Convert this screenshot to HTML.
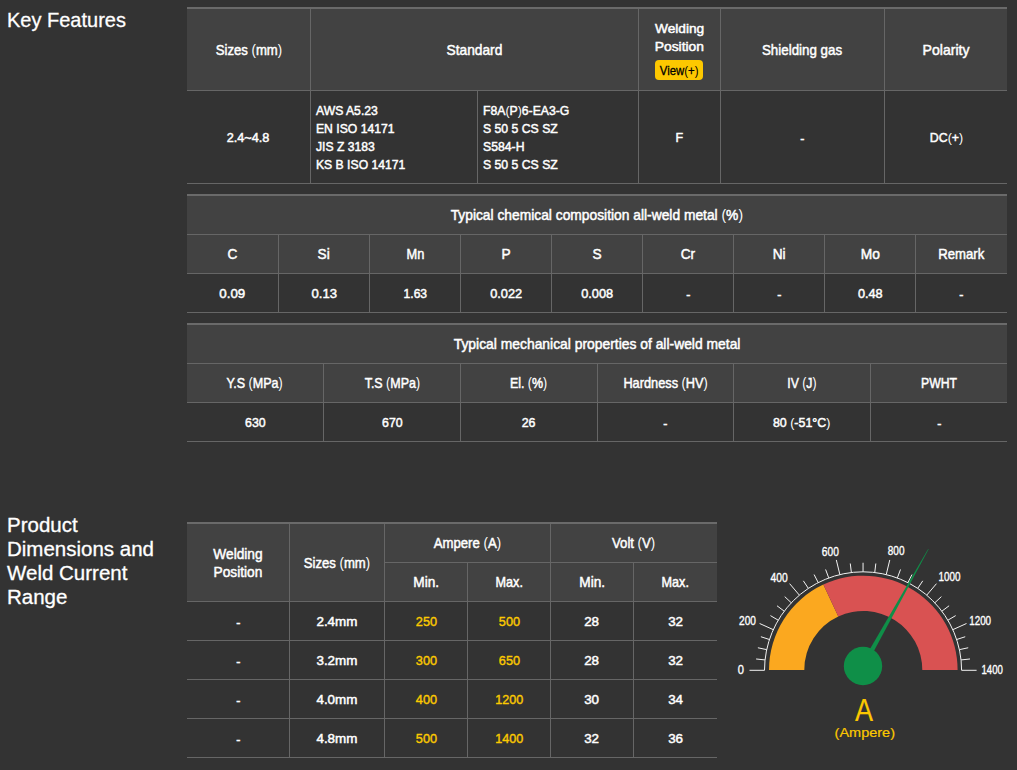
<!DOCTYPE html>
<html><head><meta charset="utf-8"><style>
html,body{margin:0;padding:0;background:#333333;}
body{width:1017px;height:770px;position:relative;overflow:hidden;font-family:"Liberation Sans",sans-serif;color:#ffffff;}
.h{position:absolute;font-size:20px;line-height:24px;white-space:nowrap;-webkit-text-stroke:0.3px #fff;}
.t{position:absolute;display:flex;align-items:center;justify-content:center;text-align:center;white-space:nowrap;}
.t>div{-webkit-text-stroke:0.5px #fff;}
.t.hd>div{-webkit-text-stroke:0.5px #fff;}
.pr{-webkit-text-stroke:0 !important;}
.t.left{justify-content:flex-start;text-align:left;}
.t.left>div{transform-origin:left center;}
.t.gold{color:#fcca00;}
.t.gold>div{-webkit-text-stroke:0.4px #fcca00;}
.t.badge2{color:#000;font-size:13px !important}
.t.badge2>div{-webkit-text-stroke:0.3px #000;}
.badge{display:inline-block;background:#fcc800;color:#000;-webkit-text-stroke:0.3px #000;border-radius:5px;height:20px;line-height:20px;padding:0 3px;font-size:12.5px;margin-top:2px;}
</style></head>
<body>
<div class="h" style="left:7px;top:7.5px;font-size:21px;transform:scaleX(0.952);transform-origin:left">Key Features</div>
<div class="h" style="left:7px;top:512.5px;font-size:20.5px">Product<br>Dimensions and<br>Weld Current<br>Range</div>
<div style="position:absolute;left:187px;top:7px;width:820px;height:2px;background:#6a6a6a"></div>
<div style="position:absolute;left:187px;top:9px;width:820px;height:81px;background:#424242"></div>
<div style="position:absolute;left:187px;top:90px;width:820px;height:1px;background:#666666"></div>
<div style="position:absolute;left:187px;top:183px;width:820px;height:1px;background:#666666"></div>
<div style="position:absolute;left:310px;top:9px;width:1px;height:174px;background:#666666"></div>
<div style="position:absolute;left:638px;top:9px;width:1px;height:174px;background:#666666"></div>
<div style="position:absolute;left:720px;top:9px;width:1px;height:174px;background:#666666"></div>
<div style="position:absolute;left:884px;top:9px;width:1px;height:174px;background:#666666"></div>
<div style="position:absolute;left:477px;top:91px;width:1px;height:92px;background:#666666"></div>
<div class="t hd " style="left:187px;top:8.5px;width:123px;height:81px;font-size:15.0px;"><div style="transform:scaleX(0.8759)">Sizes <span class="pr">(</span>mm<span class="pr">)</span></div></div>
<div class="t hd " style="left:311px;top:8.5px;width:327px;height:81px;font-size:15.0px;"><div style="transform:scaleX(0.9167)">Standard</div></div>
<div class="t bd " style="left:639px;top:20.0px;width:81px;height:16px;font-size:13.7px;"><div style="transform:scaleX(1.0010)">Welding</div></div>
<div class="t bd " style="left:639px;top:38.1px;width:81px;height:16px;font-size:13.7px;"><div style="transform:scaleX(1.0112)">Position</div></div>
<div style="position:absolute;left:655px;top:60px;width:48px;height:20px;border-radius:4px;background:#fdc800"></div>
<div class="t bd badge2" style="left:655px;top:60.5px;width:48px;height:20px;font-size:13.7px;"><div style="transform:scaleX(0.8730)">View<span class="pr">(</span>+<span class="pr">)</span></div></div>
<div class="t hd " style="left:721px;top:8.5px;width:163px;height:81px;font-size:15.0px;"><div style="transform:scaleX(0.8899)">Shielding gas</div></div>
<div class="t hd " style="left:885px;top:8.5px;width:122px;height:81px;font-size:15.0px;"><div style="transform:scaleX(0.9364)">Polarity</div></div>
<div class="t bd " style="left:187px;top:91.8px;width:123px;height:92px;font-size:13.7px;"><div style="transform:scaleX(0.9267)">2.4~4.8</div></div>
<div class="t bd left" style="left:316px;top:91.8px;width:161px;height:92px;font-size:13.7px;line-height:18px;"><div style="transform:scaleX(0.8894)">AWS A5.23<br>EN ISO 14171<br>JIS Z 3183<br>KS B ISO 14171</div></div>
<div class="t bd left" style="left:483px;top:91.8px;width:155px;height:92px;font-size:13.7px;line-height:18px;"><div style="transform:scaleX(0.8938)">F8A<span class="pr">(</span>P<span class="pr">)</span>6-EA3-G<br>S 50 5 CS SZ<br>S584-H<br>S 50 5 CS SZ</div></div>
<div class="t bd " style="left:639px;top:91.8px;width:81px;height:92px;font-size:13.7px;"><div style="transform:scaleX(0.9100)">F</div></div>
<div class="t bd " style="left:721px;top:92.8px;width:163px;height:92px;font-size:13.7px;"><div style="transform:scaleX(0.9100)">-</div></div>
<div class="t bd " style="left:885px;top:91.8px;width:122px;height:92px;font-size:13.7px;"><div style="transform:scaleX(0.9032)">DC<span class="pr">(</span>+<span class="pr">)</span></div></div>
<div style="position:absolute;left:187px;top:194px;width:820px;height:2px;background:#6a6a6a"></div>
<div style="position:absolute;left:187px;top:196px;width:820px;height:77px;background:#424242"></div>
<div style="position:absolute;left:187px;top:234px;width:820px;height:1px;background:#666666"></div>
<div style="position:absolute;left:187px;top:273px;width:820px;height:1px;background:#666666"></div>
<div style="position:absolute;left:187px;top:312px;width:820px;height:1px;background:#666666"></div>
<div style="position:absolute;left:278px;top:235px;width:1px;height:77px;background:#666666"></div>
<div style="position:absolute;left:369px;top:235px;width:1px;height:77px;background:#666666"></div>
<div style="position:absolute;left:460px;top:235px;width:1px;height:77px;background:#666666"></div>
<div style="position:absolute;left:551px;top:235px;width:1px;height:77px;background:#666666"></div>
<div style="position:absolute;left:642px;top:235px;width:1px;height:77px;background:#666666"></div>
<div style="position:absolute;left:733px;top:235px;width:1px;height:77px;background:#666666"></div>
<div style="position:absolute;left:824px;top:235px;width:1px;height:77px;background:#666666"></div>
<div style="position:absolute;left:915px;top:235px;width:1px;height:77px;background:#666666"></div>
<div class="t hd " style="left:187px;top:195.5px;width:820px;height:38px;font-size:15.0px;"><div style="transform:scaleX(0.9204)">Typical chemical composition all-weld metal <span class="pr">(</span>%<span class="pr">)</span></div></div>
<div class="t hd " style="left:187px;top:234.5px;width:91px;height:38px;font-size:15.0px;"><div style="transform:scaleX(0.9100)">C</div></div>
<div class="t bd " style="left:187px;top:274.8px;width:91px;height:38px;font-size:13.7px;"><div style="transform:scaleX(0.9722)">0.09</div></div>
<div class="t hd " style="left:279px;top:234.5px;width:90px;height:38px;font-size:15.0px;"><div style="transform:scaleX(0.9100)">Si</div></div>
<div class="t bd " style="left:279px;top:274.8px;width:90px;height:38px;font-size:13.7px;"><div style="transform:scaleX(0.9573)">0.13</div></div>
<div class="t hd " style="left:370px;top:234.5px;width:90px;height:38px;font-size:15.0px;"><div style="transform:scaleX(0.8558)">Mn</div></div>
<div class="t bd " style="left:370px;top:274.8px;width:90px;height:38px;font-size:13.7px;"><div style="transform:scaleX(0.8831)">1.63</div></div>
<div class="t hd " style="left:461px;top:234.5px;width:90px;height:38px;font-size:15.0px;"><div style="transform:scaleX(0.9100)">P</div></div>
<div class="t bd " style="left:461px;top:274.8px;width:90px;height:38px;font-size:13.7px;"><div style="transform:scaleX(0.9335)">0.022</div></div>
<div class="t hd " style="left:552px;top:234.5px;width:90px;height:38px;font-size:15.0px;"><div style="transform:scaleX(0.9100)">S</div></div>
<div class="t bd " style="left:552px;top:274.8px;width:90px;height:38px;font-size:13.7px;"><div style="transform:scaleX(0.9335)">0.008</div></div>
<div class="t hd " style="left:643px;top:234.5px;width:90px;height:38px;font-size:15.0px;"><div style="transform:scaleX(0.9100)">Cr</div></div>
<div class="t bd " style="left:643px;top:275.8px;width:90px;height:38px;font-size:13.7px;"><div style="transform:scaleX(0.9100)">-</div></div>
<div class="t hd " style="left:734px;top:234.5px;width:90px;height:38px;font-size:15.0px;"><div style="transform:scaleX(0.9100)">Ni</div></div>
<div class="t bd " style="left:734px;top:275.8px;width:90px;height:38px;font-size:13.7px;"><div style="transform:scaleX(0.9100)">-</div></div>
<div class="t hd " style="left:825px;top:234.5px;width:90px;height:38px;font-size:15.0px;"><div style="transform:scaleX(0.9173)">Mo</div></div>
<div class="t bd " style="left:825px;top:274.8px;width:90px;height:38px;font-size:13.7px;"><div style="transform:scaleX(0.9276)">0.48</div></div>
<div class="t hd " style="left:916px;top:234.5px;width:91px;height:38px;font-size:15.0px;"><div style="transform:scaleX(0.8761)">Remark</div></div>
<div class="t bd " style="left:916px;top:275.8px;width:91px;height:38px;font-size:13.7px;"><div style="transform:scaleX(0.9100)">-</div></div>
<div style="position:absolute;left:187px;top:323px;width:820px;height:2px;background:#6a6a6a"></div>
<div style="position:absolute;left:187px;top:325px;width:820px;height:77px;background:#424242"></div>
<div style="position:absolute;left:187px;top:363px;width:820px;height:1px;background:#666666"></div>
<div style="position:absolute;left:187px;top:402px;width:820px;height:1px;background:#666666"></div>
<div style="position:absolute;left:187px;top:441px;width:820px;height:1px;background:#666666"></div>
<div style="position:absolute;left:323px;top:364px;width:1px;height:77px;background:#666666"></div>
<div style="position:absolute;left:460px;top:364px;width:1px;height:77px;background:#666666"></div>
<div style="position:absolute;left:597px;top:364px;width:1px;height:77px;background:#666666"></div>
<div style="position:absolute;left:733px;top:364px;width:1px;height:77px;background:#666666"></div>
<div style="position:absolute;left:870px;top:364px;width:1px;height:77px;background:#666666"></div>
<div class="t hd " style="left:187px;top:324.5px;width:820px;height:38px;font-size:15.0px;"><div style="transform:scaleX(0.9245)">Typical mechanical properties of all-weld metal</div></div>
<div class="t hd " style="left:187px;top:363.5px;width:136px;height:38px;font-size:15.0px;"><div style="transform:scaleX(0.8364)">Y.S <span class="pr">(</span>MPa<span class="pr">)</span></div></div>
<div class="t bd " style="left:187px;top:403.8px;width:136px;height:38px;font-size:13.7px;"><div style="transform:scaleX(0.9028)">630</div></div>
<div class="t hd " style="left:324px;top:363.5px;width:136px;height:38px;font-size:15.0px;"><div style="transform:scaleX(0.8305)">T.S <span class="pr">(</span>MPa<span class="pr">)</span></div></div>
<div class="t bd " style="left:324px;top:403.8px;width:136px;height:38px;font-size:13.7px;"><div style="transform:scaleX(0.9028)">670</div></div>
<div class="t hd " style="left:461px;top:363.5px;width:136px;height:38px;font-size:15.0px;"><div style="transform:scaleX(0.8278)">El. <span class="pr">(</span>%<span class="pr">)</span></div></div>
<div class="t bd " style="left:461px;top:403.8px;width:136px;height:38px;font-size:13.7px;"><div style="transform:scaleX(0.9068)">26</div></div>
<div class="t hd " style="left:598px;top:363.5px;width:135px;height:38px;font-size:15.0px;"><div style="transform:scaleX(0.8513)">Hardness <span class="pr">(</span>HV<span class="pr">)</span></div></div>
<div class="t bd " style="left:598px;top:404.8px;width:135px;height:38px;font-size:13.7px;"><div style="transform:scaleX(0.9100)">-</div></div>
<div class="t hd " style="left:734px;top:363.5px;width:136px;height:38px;font-size:15.0px;"><div style="transform:scaleX(0.8160)">IV <span class="pr">(</span>J<span class="pr">)</span></div></div>
<div class="t bd " style="left:734px;top:403.8px;width:136px;height:38px;font-size:13.7px;"><div style="transform:scaleX(0.9065)">80 <span class="pr">(</span>-51°C<span class="pr">)</span></div></div>
<div class="t hd " style="left:871px;top:363.5px;width:136px;height:38px;font-size:15.0px;"><div style="transform:scaleX(0.8144)">PWHT</div></div>
<div class="t bd " style="left:871px;top:404.8px;width:136px;height:38px;font-size:13.7px;"><div style="transform:scaleX(0.9100)">-</div></div>
<div style="position:absolute;left:187px;top:522px;width:530px;height:2px;background:#6a6a6a"></div>
<div style="position:absolute;left:187px;top:524px;width:530px;height:77px;background:#424242"></div>
<div style="position:absolute;left:384px;top:562px;width:333px;height:1px;background:#666666"></div>
<div style="position:absolute;left:187px;top:601px;width:530px;height:1px;background:#666666"></div>
<div style="position:absolute;left:289px;top:524px;width:1px;height:233px;background:#666666"></div>
<div style="position:absolute;left:384px;top:524px;width:1px;height:233px;background:#666666"></div>
<div style="position:absolute;left:550px;top:524px;width:1px;height:233px;background:#666666"></div>
<div style="position:absolute;left:467px;top:563px;width:1px;height:194px;background:#666666"></div>
<div style="position:absolute;left:633px;top:563px;width:1px;height:194px;background:#666666"></div>
<div style="position:absolute;left:187px;top:640px;width:530px;height:1px;background:#666666"></div>
<div style="position:absolute;left:187px;top:679px;width:530px;height:1px;background:#666666"></div>
<div style="position:absolute;left:187px;top:718px;width:530px;height:1px;background:#666666"></div>
<div style="position:absolute;left:187px;top:757px;width:530px;height:1px;background:#666666"></div>
<div class="t hd " style="left:187px;top:524.5px;width:102px;height:77px;font-size:15.0px;line-height:18px;"><div style="transform:scaleX(0.9133)">Welding<br>Position</div></div>
<div class="t hd " style="left:290px;top:524.2px;width:94px;height:77px;font-size:15.0px;"><div style="transform:scaleX(0.8759)">Sizes <span class="pr">(</span>mm<span class="pr">)</span></div></div>
<div class="t hd " style="left:385px;top:523.5px;width:165px;height:38px;font-size:15.0px;"><div style="transform:scaleX(0.8792)">Ampere <span class="pr">(</span>A<span class="pr">)</span></div></div>
<div class="t hd " style="left:551px;top:523.5px;width:166px;height:38px;font-size:15.0px;"><div style="transform:scaleX(0.8747)">Volt <span class="pr">(</span>V<span class="pr">)</span></div></div>
<div class="t hd " style="left:385px;top:562.5px;width:82px;height:38px;font-size:15.0px;"><div style="transform:scaleX(0.9110)">Min.</div></div>
<div class="t hd " style="left:468px;top:562.5px;width:82px;height:38px;font-size:15.0px;"><div style="transform:scaleX(0.8415)">Max.</div></div>
<div class="t hd " style="left:551px;top:562.5px;width:82px;height:38px;font-size:15.0px;"><div style="transform:scaleX(0.9110)">Min.</div></div>
<div class="t hd " style="left:634px;top:562.5px;width:83px;height:38px;font-size:15.0px;"><div style="transform:scaleX(0.8415)">Max.</div></div>
<div class="t bd " style="left:187px;top:603.8px;width:102px;height:38px;font-size:13.7px;"><div style="transform:scaleX(0.9100)">-</div></div>
<div class="t bd " style="left:290px;top:602.8px;width:94px;height:38px;font-size:13.7px;"><div style="transform:scaleX(0.9798)">2.4mm</div></div>
<div class="t bd gold" style="left:385px;top:602.8px;width:82px;height:38px;font-size:13.7px;"><div style="transform:scaleX(0.9287)">250</div></div>
<div class="t bd gold" style="left:468px;top:602.8px;width:82px;height:38px;font-size:13.7px;"><div style="transform:scaleX(0.9287)">500</div></div>
<div class="t bd " style="left:551px;top:602.8px;width:82px;height:38px;font-size:13.7px;"><div style="transform:scaleX(0.9775)">28</div></div>
<div class="t bd " style="left:634px;top:602.8px;width:83px;height:38px;font-size:13.7px;"><div style="transform:scaleX(0.9775)">32</div></div>
<div class="t bd " style="left:187px;top:642.8px;width:102px;height:38px;font-size:13.7px;"><div style="transform:scaleX(0.9100)">-</div></div>
<div class="t bd " style="left:290px;top:641.8px;width:94px;height:38px;font-size:13.7px;"><div style="transform:scaleX(0.9798)">3.2mm</div></div>
<div class="t bd gold" style="left:385px;top:641.8px;width:82px;height:38px;font-size:13.7px;"><div style="transform:scaleX(0.9287)">300</div></div>
<div class="t bd gold" style="left:468px;top:641.8px;width:82px;height:38px;font-size:13.7px;"><div style="transform:scaleX(0.9287)">650</div></div>
<div class="t bd " style="left:551px;top:641.8px;width:82px;height:38px;font-size:13.7px;"><div style="transform:scaleX(0.9775)">28</div></div>
<div class="t bd " style="left:634px;top:641.8px;width:83px;height:38px;font-size:13.7px;"><div style="transform:scaleX(0.9775)">32</div></div>
<div class="t bd " style="left:187px;top:681.8px;width:102px;height:38px;font-size:13.7px;"><div style="transform:scaleX(0.9100)">-</div></div>
<div class="t bd " style="left:290px;top:680.8px;width:94px;height:38px;font-size:13.7px;"><div style="transform:scaleX(0.9798)">4.0mm</div></div>
<div class="t bd gold" style="left:385px;top:680.8px;width:82px;height:38px;font-size:13.7px;"><div style="transform:scaleX(0.9287)">400</div></div>
<div class="t bd gold" style="left:468px;top:680.8px;width:82px;height:38px;font-size:13.7px;"><div style="transform:scaleX(0.9188)">1200</div></div>
<div class="t bd " style="left:551px;top:680.8px;width:82px;height:38px;font-size:13.7px;"><div style="transform:scaleX(0.9775)">30</div></div>
<div class="t bd " style="left:634px;top:680.8px;width:83px;height:38px;font-size:13.7px;"><div style="transform:scaleX(0.9775)">34</div></div>
<div class="t bd " style="left:187px;top:720.8px;width:102px;height:38px;font-size:13.7px;"><div style="transform:scaleX(0.9100)">-</div></div>
<div class="t bd " style="left:290px;top:719.8px;width:94px;height:38px;font-size:13.7px;"><div style="transform:scaleX(0.9798)">4.8mm</div></div>
<div class="t bd gold" style="left:385px;top:719.8px;width:82px;height:38px;font-size:13.7px;"><div style="transform:scaleX(0.9287)">500</div></div>
<div class="t bd gold" style="left:468px;top:719.8px;width:82px;height:38px;font-size:13.7px;"><div style="transform:scaleX(0.9188)">1400</div></div>
<div class="t bd " style="left:551px;top:719.8px;width:82px;height:38px;font-size:13.7px;"><div style="transform:scaleX(0.9775)">32</div></div>
<div class="t bd " style="left:634px;top:719.8px;width:83px;height:38px;font-size:13.7px;"><div style="transform:scaleX(0.9775)">36</div></div>
<svg style="position:absolute;left:0;top:0" width="1017" height="770" viewBox="0 0 1017 770">
<path d="M769.00,670.00 A94.3,94.3 0 0 1 823.34,584.58 L838.30,616.56 A59.0,59.0 0 0 0 804.30,670.00 Z" fill="#fba81f"/>
<path d="M823.34,584.58 A94.3,94.3 0 0 1 957.60,670.00 L922.30,670.00 A59.0,59.0 0 0 0 838.30,616.56 Z" fill="#d95252"/>
<path d="M764.50,670.30 A98.55,98.55 0 0 1 961.60,670.30" fill="none" stroke="#f2f2f2" stroke-width="1"/>
<line x1="764.50" y1="670.30" x2="749.50" y2="670.30" stroke="#f2f2f2" stroke-width="1"/>
<line x1="765.05" y1="659.93" x2="756.10" y2="658.98" stroke="#f2f2f2" stroke-width="1"/>
<line x1="766.69" y1="649.65" x2="757.89" y2="647.76" stroke="#f2f2f2" stroke-width="1"/>
<line x1="769.43" y1="639.53" x2="760.88" y2="636.72" stroke="#f2f2f2" stroke-width="1"/>
<line x1="773.26" y1="629.67" x2="759.60" y2="623.49" stroke="#f2f2f2" stroke-width="1"/>
<line x1="778.19" y1="620.18" x2="770.44" y2="615.61" stroke="#f2f2f2" stroke-width="1"/>
<line x1="784.21" y1="611.18" x2="777.00" y2="605.78" stroke="#f2f2f2" stroke-width="1"/>
<line x1="791.27" y1="602.78" x2="784.71" y2="596.61" stroke="#f2f2f2" stroke-width="1"/>
<line x1="799.34" y1="595.11" x2="789.64" y2="583.67" stroke="#f2f2f2" stroke-width="1"/>
<line x1="808.34" y1="588.33" x2="803.35" y2="580.84" stroke="#f2f2f2" stroke-width="1"/>
<line x1="818.18" y1="582.56" x2="814.09" y2="574.54" stroke="#f2f2f2" stroke-width="1"/>
<line x1="828.74" y1="577.92" x2="825.60" y2="569.48" stroke="#f2f2f2" stroke-width="1"/>
<line x1="839.85" y1="574.52" x2="836.32" y2="559.94" stroke="#f2f2f2" stroke-width="1"/>
<line x1="851.35" y1="572.45" x2="850.28" y2="563.51" stroke="#f2f2f2" stroke-width="1"/>
<line x1="863.05" y1="571.75" x2="863.05" y2="562.75" stroke="#f2f2f2" stroke-width="1"/>
<line x1="874.75" y1="572.45" x2="875.82" y2="563.51" stroke="#f2f2f2" stroke-width="1"/>
<line x1="886.25" y1="574.52" x2="889.78" y2="559.94" stroke="#f2f2f2" stroke-width="1"/>
<line x1="897.36" y1="577.92" x2="900.50" y2="569.48" stroke="#f2f2f2" stroke-width="1"/>
<line x1="907.92" y1="582.56" x2="912.01" y2="574.54" stroke="#f2f2f2" stroke-width="1"/>
<line x1="917.76" y1="588.33" x2="922.75" y2="580.84" stroke="#f2f2f2" stroke-width="1"/>
<line x1="926.76" y1="595.11" x2="936.46" y2="583.67" stroke="#f2f2f2" stroke-width="1"/>
<line x1="934.83" y1="602.78" x2="941.39" y2="596.61" stroke="#f2f2f2" stroke-width="1"/>
<line x1="941.89" y1="611.18" x2="949.10" y2="605.78" stroke="#f2f2f2" stroke-width="1"/>
<line x1="947.91" y1="620.18" x2="955.66" y2="615.61" stroke="#f2f2f2" stroke-width="1"/>
<line x1="952.84" y1="629.67" x2="966.50" y2="623.49" stroke="#f2f2f2" stroke-width="1"/>
<line x1="956.67" y1="639.53" x2="965.22" y2="636.72" stroke="#f2f2f2" stroke-width="1"/>
<line x1="959.41" y1="649.65" x2="968.21" y2="647.76" stroke="#f2f2f2" stroke-width="1"/>
<line x1="961.05" y1="659.93" x2="970.00" y2="658.98" stroke="#f2f2f2" stroke-width="1"/>
<line x1="961.60" y1="670.30" x2="976.60" y2="670.30" stroke="#f2f2f2" stroke-width="1"/>
<text x="737.8" y="674.4" font-family="Liberation Sans" font-size="12" fill="#ffffff" stroke="#ffffff" stroke-width="0.35" textLength="6.2" lengthAdjust="spacingAndGlyphs">0</text>
<text x="739.0" y="624.7" font-family="Liberation Sans" font-size="12" fill="#ffffff" stroke="#ffffff" stroke-width="0.35" textLength="16.9" lengthAdjust="spacingAndGlyphs">200</text>
<text x="770.6" y="581.6" font-family="Liberation Sans" font-size="12" fill="#ffffff" stroke="#ffffff" stroke-width="0.35" textLength="17.2" lengthAdjust="spacingAndGlyphs">400</text>
<text x="821.8" y="555.5" font-family="Liberation Sans" font-size="12" fill="#ffffff" stroke="#ffffff" stroke-width="0.35" textLength="17.0" lengthAdjust="spacingAndGlyphs">600</text>
<text x="887.8" y="555.4" font-family="Liberation Sans" font-size="12" fill="#ffffff" stroke="#ffffff" stroke-width="0.35" textLength="16.7" lengthAdjust="spacingAndGlyphs">800</text>
<text x="938.4" y="581.3" font-family="Liberation Sans" font-size="12" fill="#ffffff" stroke="#ffffff" stroke-width="0.35" textLength="22.0" lengthAdjust="spacingAndGlyphs">1000</text>
<text x="969.2" y="624.5" font-family="Liberation Sans" font-size="12" fill="#ffffff" stroke="#ffffff" stroke-width="0.35" textLength="21.9" lengthAdjust="spacingAndGlyphs">1200</text>
<text x="981.5" y="674.4" font-family="Liberation Sans" font-size="12" fill="#ffffff" stroke="#ffffff" stroke-width="0.35" textLength="21.4" lengthAdjust="spacingAndGlyphs">1400</text>
<path d="M865.18,667.22 L928.59,549.15 L928.15,548.91 L860.82,664.78 Z" fill="#0f8f48"/>
<circle cx="863.0" cy="666.0" r="19.2" fill="#0f8f48"/>
<text transform="translate(864.05,721.1) scale(0.87,1)" text-anchor="middle" font-family="Liberation Sans" font-size="31" fill="#fcc800" stroke="#fcc800" stroke-width="0.15">A</text>
<text x="834.6" y="736.8" font-family="Liberation Sans" font-size="13" fill="#fcc800" stroke="#fcc800" stroke-width="0.2" textLength="60.4" lengthAdjust="spacingAndGlyphs">(Ampere)</text>
</svg>
</body></html>
